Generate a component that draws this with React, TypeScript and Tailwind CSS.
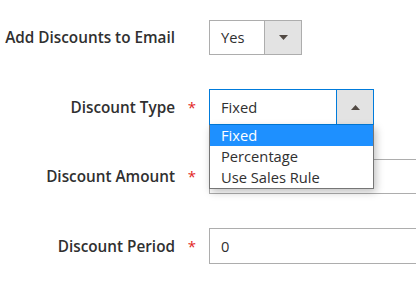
export default function App() {
  return (
    <div
      className="w-[416px] h-[283px] overflow-hidden bg-white text-[14.7px] text-[#303030]"
      style={{ fontFamily: '"Open Sans", "DejaVu Sans", sans-serif' }}
    >
      <div className="flex flex-col gap-[34px] pt-[20px]">
        <Row label="Add Discounts to Email">
          <div className="flex h-[35px] w-[93px] shrink-0 border border-[#adadad] bg-white">
            <div className="flex flex-1 items-center pl-[11px]">Yes</div>
            <div className="flex w-[37px] items-center justify-center border-l border-[#adadad] bg-[#e3e3e3]">
              <svg width="9" height="5" viewBox="0 0 9 5">
                <path d="M0 0h9L4.5 5z" fill="#514943" />
              </svg>
            </div>
          </div>
        </Row>

        <Row label="Discount Type" required>
          <div className="relative z-10 shrink-0">
            <div className="flex h-[36px] w-[165px] border border-[#007bdb] bg-white">
              <div className="flex flex-1 items-center pl-[11px]">Fixed</div>
              <div className="flex w-[37px] items-center justify-center border-l border-[#007bdb] bg-[#e3e3e3]">
                <svg width="9" height="5" viewBox="0 0 9 5">
                  <path d="M0 5h9L4.5 0z" fill="#514943" />
                </svg>
              </div>
            </div>
            <ul className="absolute left-0 top-full w-[165px] border-x border-b border-[#767676] bg-white shadow-[2px_3px_8px_rgba(0,0,0,0.25)]">
              <li className="flex h-[21px] items-center bg-[#1e90ff] pl-[11px] text-white">Fixed</li>
              <li className="flex h-[21px] items-center pl-[11px]">Percentage</li>
              <li className="flex h-[21px] items-center pl-[11px]">Use Sales Rule</li>
            </ul>
          </div>
        </Row>

        <Row label="Discount Amount" required>
          <div className="h-[35px] w-[300px] shrink-0 border border-[#adadad] bg-white" />
        </Row>

        <Row label="Discount Period" required>
          <div className="flex h-[36px] w-[300px] shrink-0 items-center border border-[#adadad] bg-white pl-[11px]">0</div>
        </Row>
      </div>
    </div>
  )
}

function Row({ label, required, children }: { label: string; required?: boolean; children: React.ReactNode }) {
  return (
    <div className="flex items-center">
      <div className="w-[175px] shrink-0 whitespace-nowrap text-right text-[15.3px] font-semibold">{label}</div>
      <div className="w-[34px] shrink-0 text-center text-[15px] text-[#e22626]">{required ? '*' : ''}</div>
      {children}
    </div>
  )
}
